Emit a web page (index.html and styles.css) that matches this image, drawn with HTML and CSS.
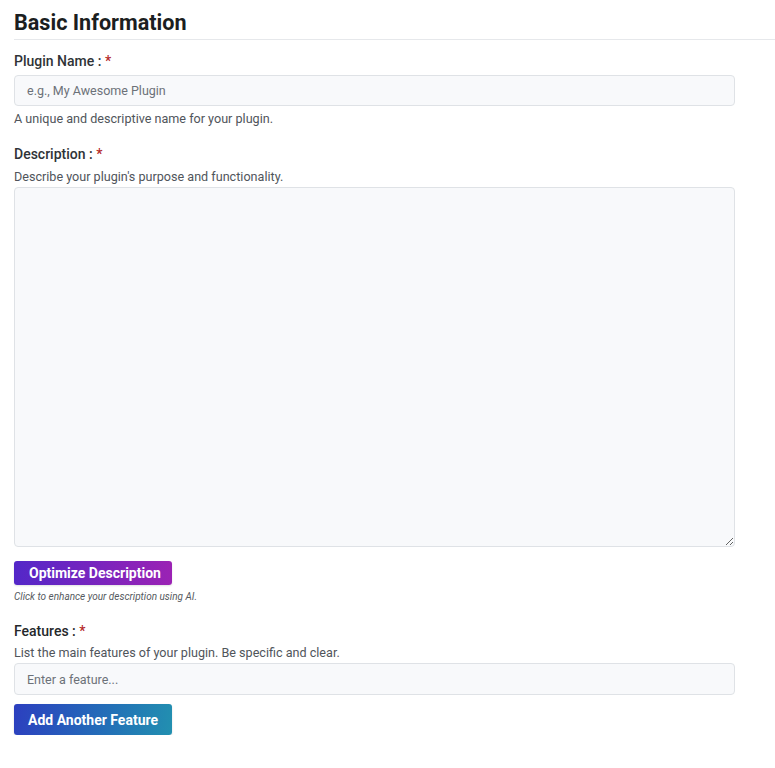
FILE: index.html
```html
<!DOCTYPE html>
<html lang="en">
<head>
<meta charset="utf-8">
<title>Basic Information</title>
<link rel="stylesheet" href="styles.css">
</head>
<body>
<section class="panel">
  <h2 class="panel-title">Basic Information</h2>
  <div class="fields">
    <div class="field field-name">
      <label class="field-label" for="plugin-name">Plugin Name : <span class="req">*</span></label>
      <input class="field-input" id="plugin-name" type="text" placeholder="e.g., My Awesome Plugin">
      <p class="field-help">A unique and descriptive name for your plugin.</p>
    </div>
    <div class="field field-desc">
      <label class="field-label" for="plugin-desc">Description : <span class="req">*</span></label>
      <p class="field-help help-above">Describe your plugin's purpose and functionality.</p>
      <textarea class="field-textarea" id="plugin-desc"></textarea>
      <button class="btn btn-optimize" type="button">Optimize Description</button>
      <p class="ai-note">Click to enhance your description using AI.</p>
    </div>
    <div class="field field-features">
      <label class="field-label label-regular" for="feature-1">Features : <span class="req">*</span></label>
      <p class="field-help help-above">List the main features of your plugin. Be specific and clear.</p>
      <input class="field-input input-feature" id="feature-1" type="text" placeholder="Enter a feature...">
      <button class="btn btn-add" type="button">Add Another Feature</button>
    </div>
  </div>
</section>
</body>
</html>
```

FILE: styles.css
```css
* { box-sizing: border-box; }

html, body {
  margin: 0;
  padding: 0;
  background: #ffffff;
}

body {
  font-family: Roboto, "Liberation Sans", Arial, sans-serif;
  color: #2b2f33;
}

.panel {
  padding: 10px 0 0 14px;
}

.panel-title {
  margin: 0;
  font-size: 21.6px;
  font-weight: 700;
  line-height: 26px;
  color: #1b1e21;
  padding-bottom: 3px;
  border-bottom: 1px solid #e6e8eb;
}

.fields {
  padding-right: 40px;
}

.field {
  display: flex;
  flex-direction: column;
  align-items: flex-start;
}

.field-name { margin-top: 11px; }
.field-desc { margin-top: 16px; }
.field-features { margin-top: 17px; }

.field-label {
  font-size: 14px;
  line-height: 20px;
  font-weight: 500;
  color: #2f3337;
  margin-bottom: 4px;
}

.label-regular {
  font-weight: 500;
  color: #25282b;
  margin-bottom: 3px;
}

.req {
  color: #b52a2a;
}

.field-input,
.field-textarea {
  width: 100%;
  background: #f8f9fb;
  border: 1px solid #dfe2e6;
  border-radius: 4px;
  font-family: inherit;
  font-size: 12.5px;
  color: #333;
  padding: 0 12px;
  outline: none;
}

.field-input {
  height: 31px;
}

.input-feature {
  height: 32px;
}

.field-input::placeholder {
  color: #6c7178;
}

.field-textarea {
  display: block;
  height: 360px;
  padding: 8px 12px;
  resize: vertical;
}

.field-help {
  margin: 4px 0 0;
  font-size: 12.6px;
  line-height: 18px;
  color: #50555b;
}

.help-above {
  margin: 0 0 1px;
}

.btn {
  border: 0;
  color: #ffffff;
  font-family: inherit;
  font-weight: 700;
  font-size: 14px;
  border-radius: 3px;
  cursor: pointer;
}

.btn-optimize {
  margin-top: 14px;
  height: 24px;
  padding: 0 11px 0 15px;
  background: linear-gradient(90deg, #5327c8 0%, #9b22b4 100%);
  box-shadow: 0 1px 2px rgba(0,0,0,0.12);
}

.ai-note {
  margin: 5px 0 0;
  font-size: 10px;
  line-height: 14px;
  font-style: italic;
  color: #555a60;
}

.btn-add {
  margin-top: 9px;
  height: 31px;
  padding: 0 14px;
  background: linear-gradient(100deg, #2c3fbf 0%, #2370b7 60%, #2290b0 100%);
  box-shadow: 0 1px 2px rgba(0,0,0,0.15);
}
```
